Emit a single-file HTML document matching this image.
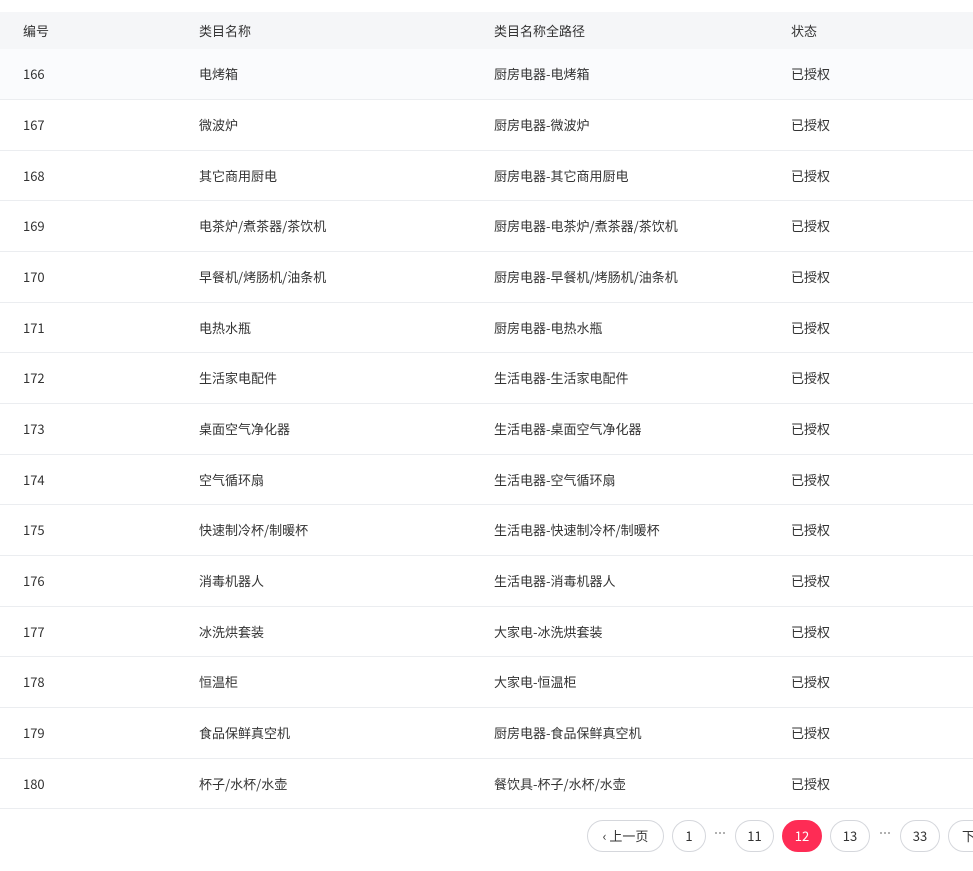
<!DOCTYPE html>
<html><head><meta charset="utf-8"><style>
*{margin:0;padding:0;box-sizing:border-box}
body{width:973px;height:871px;background:#fff;font-family:"Noto Sans CJK SC","Liberation Sans",sans-serif;font-size:13px;color:#333;overflow:hidden;position:relative}
.hd{position:absolute;top:12px;left:0;width:973px;height:37px;background:#f5f6f8;color:#333}
.row{position:absolute;left:0;width:973px;border-bottom:1px solid #ebedf0}
.c{position:absolute;top:50%;transform:translateY(-50%);white-space:nowrap;line-height:18px}
.c1{left:23px}.c2{left:199px}.c3{left:494px}.c4{left:791px}
.pg{position:absolute;top:820px;height:32px;border:1px solid #d5d7dc;border-radius:16px;text-align:center;line-height:30px;font-size:13px;color:#333;background:#fff}
.dot{position:absolute;top:832px;width:10px;height:2px;display:flex;justify-content:space-between}
.dot i{width:2px;height:2px;background:#999;border-radius:1px}
</style></head><body>
<div class="hd"><span class="c c1">编号</span><span class="c c2">类目名称</span><span class="c c3">类目名称全路径</span><span class="c c4">状态</span></div>
<div class="row" style="top:49px;height:51px;background:#fafbfd"><span class="c c1">166</span><span class="c c2">电烤箱</span><span class="c c3">厨房电器-电烤箱</span><span class="c c4">已授权</span></div>
<div class="row" style="top:100px;height:51px"><span class="c c1">167</span><span class="c c2">微波炉</span><span class="c c3">厨房电器-微波炉</span><span class="c c4">已授权</span></div>
<div class="row" style="top:151px;height:50px"><span class="c c1">168</span><span class="c c2">其它商用厨电</span><span class="c c3">厨房电器-其它商用厨电</span><span class="c c4">已授权</span></div>
<div class="row" style="top:201px;height:51px"><span class="c c1">169</span><span class="c c2">电茶炉/煮茶器/茶饮机</span><span class="c c3">厨房电器-电茶炉/煮茶器/茶饮机</span><span class="c c4">已授权</span></div>
<div class="row" style="top:252px;height:51px"><span class="c c1">170</span><span class="c c2">早餐机/烤肠机/油条机</span><span class="c c3">厨房电器-早餐机/烤肠机/油条机</span><span class="c c4">已授权</span></div>
<div class="row" style="top:303px;height:50px"><span class="c c1">171</span><span class="c c2">电热水瓶</span><span class="c c3">厨房电器-电热水瓶</span><span class="c c4">已授权</span></div>
<div class="row" style="top:353px;height:51px"><span class="c c1">172</span><span class="c c2">生活家电配件</span><span class="c c3">生活电器-生活家电配件</span><span class="c c4">已授权</span></div>
<div class="row" style="top:404px;height:51px"><span class="c c1">173</span><span class="c c2">桌面空气净化器</span><span class="c c3">生活电器-桌面空气净化器</span><span class="c c4">已授权</span></div>
<div class="row" style="top:455px;height:50px"><span class="c c1">174</span><span class="c c2">空气循环扇</span><span class="c c3">生活电器-空气循环扇</span><span class="c c4">已授权</span></div>
<div class="row" style="top:505px;height:51px"><span class="c c1">175</span><span class="c c2">快速制冷杯/制暖杯</span><span class="c c3">生活电器-快速制冷杯/制暖杯</span><span class="c c4">已授权</span></div>
<div class="row" style="top:556px;height:51px"><span class="c c1">176</span><span class="c c2">消毒机器人</span><span class="c c3">生活电器-消毒机器人</span><span class="c c4">已授权</span></div>
<div class="row" style="top:607px;height:50px"><span class="c c1">177</span><span class="c c2">冰洗烘套装</span><span class="c c3">大家电-冰洗烘套装</span><span class="c c4">已授权</span></div>
<div class="row" style="top:657px;height:51px"><span class="c c1">178</span><span class="c c2">恒温柜</span><span class="c c3">大家电-恒温柜</span><span class="c c4">已授权</span></div>
<div class="row" style="top:708px;height:51px"><span class="c c1">179</span><span class="c c2">食品保鲜真空机</span><span class="c c3">厨房电器-食品保鲜真空机</span><span class="c c4">已授权</span></div>
<div class="row" style="top:759px;height:50px"><span class="c c1">180</span><span class="c c2">杯子/水杯/水壶</span><span class="c c3">餐饮具-杯子/水杯/水壶</span><span class="c c4">已授权</span></div>
<div class="pg" style="left:587px;width:77px">‹ 上一页</div>
<div class="pg" style="left:672px;width:34px">1</div>
<div class="dot" style="left:715px"><i></i><i></i><i></i></div>
<div class="pg" style="left:735px;width:39px">11</div>
<div class="pg" style="left:782px;width:40px;background:#fe2c55;border-color:#fe2c55;color:#fff">12</div>
<div class="pg" style="left:830px;width:40px">13</div>
<div class="dot" style="left:880px"><i></i><i></i><i></i></div>
<div class="pg" style="left:900px;width:40px">33</div>
<div class="pg" style="left:948px;width:60px;text-align:left;padding-left:13px">下一页</div>
</body></html>
